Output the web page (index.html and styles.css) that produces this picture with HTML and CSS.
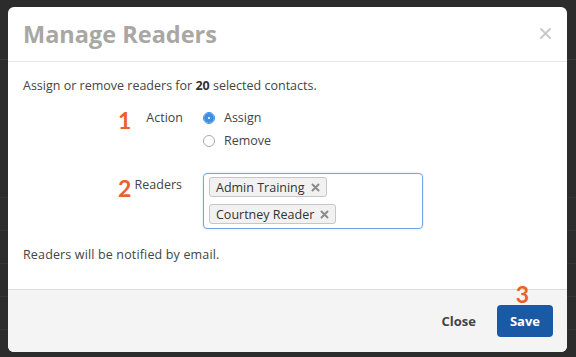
FILE: index.html
```html
<!DOCTYPE html>
<html lang="en">
<head>
  <meta charset="UTF-8" />
  <title>Manage Readers</title>
  <link rel="stylesheet" href="styles.css">
</head>
<body>
<div class="backdrop">
  <div class="modal">
    <header class="modal-head">
      <h2>Manage Readers</h2>
      <svg class="close-x" width="11" height="11" viewBox="0 0 11 11"><path d="M1 1 L10 10 M10 1 L1 10" stroke="#c8c8c8" stroke-width="1.8" stroke-linecap="round"/></svg>
    </header>

    <div class="modal-body">
      <p class="intro">Assign or remove readers for <b>20</b> selected contacts.</p>

      <div class="row">
        <span class="step">1</span>
        <div class="label">Action</div>
        <div class="field">
          <label class="radio"><span class="dot checked"></span>Assign</label>
          <label class="radio"><span class="dot"></span>Remove</label>
        </div>
      </div>

      <div class="row readers">
        <span class="step">2</span>
        <div class="label">Readers</div>
        <div class="field">
          <div class="tagbox">
            <span class="tag">Admin Training <svg width="9" height="9" viewBox="0 0 9 9"><path d="M1.5 1.5 L7.5 7.5 M7.5 1.5 L1.5 7.5" stroke="#8a8a8a" stroke-width="2" stroke-linecap="round"/></svg></span>
            <span class="tag">Courtney Reader <svg width="9" height="9" viewBox="0 0 9 9"><path d="M1.5 1.5 L7.5 7.5 M7.5 1.5 L1.5 7.5" stroke="#8a8a8a" stroke-width="2" stroke-linecap="round"/></svg></span>
          </div>
        </div>
      </div>

      <p class="note">Readers will be notified by email.</p>
    </div>

    <footer class="modal-foot">
      <span class="step step-3">3</span>
      <button class="btn btn-link">Close</button>
      <button class="btn btn-primary">Save</button>
    </footer>
  </div>
</div>
</body>
</html>
```

FILE: styles.css
```css
/* Reset */
* { margin: 0; padding: 0; box-sizing: border-box; }
html, body { width: 100%; height: 100%; overflow: hidden; }
body {
  font-family: 'Open Sans', Lato, sans-serif;
  font-size: 12.5px; color: #444;
  background: #2c2c2c;
}
/* Page behind the dialog */
.backdrop {
  height: 100%; padding: 7px 9px 5px 8px;
  background:
    linear-gradient(#3a3a3a, #3a3a3a) 0 59px / 100% 1px no-repeat,
    repeating-linear-gradient(to bottom, transparent 0 32px, #353535 32px 33px) 0 165px / 100% 190px no-repeat,
    #2c2c2c;
}
/* Dialog */
.modal {
  height: 345px; background: #fff; border-radius: 6px;
  overflow: hidden; display: flex; flex-direction: column;
}
.modal-head {
  height: 55px; border-bottom: 1px solid #e6e6e6;
  display: flex; align-items: center; justify-content: space-between;
  padding: 0 16px 0 15px;
}
.modal-head h2 { font-size: 23.5px; font-weight: 700; color: #a8a7a4; margin-top: -1px; }
.close-x { margin-top: -1px; }

.modal-body { flex: 1; padding: 15px 15px 0; }
.intro { line-height: 18px; }
.intro b { color: #333; }

.row { position: relative; display: flex; gap: 19px; }
.row:first-of-type { margin-top: 11px; }
.label { width: 161px; text-align: right; line-height: 23px; padding-right: 1px; }
.step {
  position: absolute; color: #e8632b; font-family: Lato, sans-serif;
  font-weight: 700; font-size: 23px; line-height: 1;
}
.row .step { left: 95px; top: 3px; }
.row.readers .step { top: 4px; }

.radio { display: flex; align-items: center; gap: 9px; line-height: 23px; }
.dot {
  width: 12px; height: 12px; border-radius: 50%;
  border: 1px solid #a9a9a9; background: #fff;
}
.dot.checked { border-color: #3b8fe8; box-shadow: inset 0 0 0 4px #3b8fe8; }

.readers { margin-top: 21px; }
.readers .label { padding-top: 3px; line-height: 18px; width: 160px; }
.field { flex: none; }
.readers .field { margin-left: 1px; }
.tagbox {
  width: 220px; height: 56px; padding: 3px 5px;
  border: 1px solid #6ea6e6; border-radius: 4px;
  box-shadow: 0 0 2px rgba(80,150,230,.35);
  display: flex; flex-wrap: wrap; align-content: flex-start; gap: 7px 6px;
}
.tag {
  height: 20px; padding: 0 6px; display: inline-flex; align-items: center; gap: 6px;
  background: #f1f1f1; border: 1px solid #c6c6c6; border-radius: 3px;
  color: #333; white-space: nowrap;
}

.note { margin-top: 17px; line-height: 18px; letter-spacing: .15px; }

/* Footer */
.modal-foot {
  position: relative; height: 63px; background: #f4f4f4; border-top: 1px solid #dcdcdc;
  display: flex; justify-content: flex-end; align-items: flex-start;
  padding: 15px 14px 0 0; gap: 13px;
}
.step-3 { right: 38px; top: -7px; }
.btn {
  height: 32px; border: 0; border-radius: 4px; font-family: inherit;
  font-size: 13px; font-weight: 700; cursor: pointer;
}
.btn-link { background: none; color: #444; padding: 0 8px; }
.btn-primary { width: 56px; background: #1a5aa5; color: #fff; }
```
